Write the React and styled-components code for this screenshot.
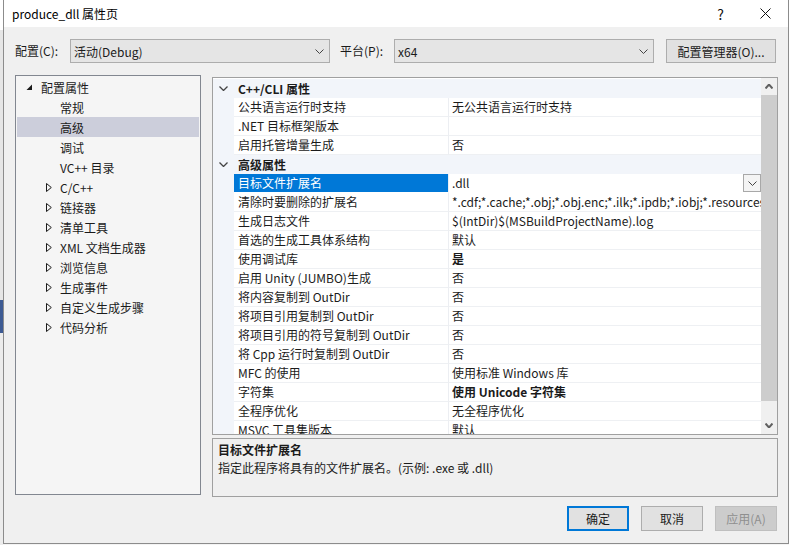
import React from 'react';
import styled, { createGlobalStyle } from 'styled-components';

const FONT = `"Noto Sans CJK SC", "Noto Sans", sans-serif`;

const GlobalStyle = createGlobalStyle`
  html, body { margin: 0; padding: 0; background: #f4f4f4; }
  body { font-family: ${FONT}; font-size: 12px; color: #1b1b1b; }
  * { box-sizing: border-box; }
`;

const Page = styled.div`
  display: flex;
  width: 789px;
  height: 545px;
  overflow: hidden;
  background: #f4f4f4;
`;

const Backdrop = styled.div`
  width: 3px;
  flex: none;
  background: linear-gradient(to bottom, #ffffff 0 30px, #e6e6e6 30px 300px, #3d5a93 300px 333px, #ececec 333px);
`;

const Window = styled.div`
  width: 786px;
  height: 544px;
  flex: none;
  display: flex;
  flex-direction: column;
  background: #f0f0f0;
  border: 1px solid #8c8c8c;
  border-top: none;
`;

const TitleBar = styled.div`
  height: 27px;
  flex: none;
  display: flex;
  align-items: center;
  background: #ffffff;
  padding-left: 8px;
`;

const Title = styled.div`
  flex: 1;
  font-size: 12px;
  color: #000;
`;

const TitleButton = styled.div`
  width: 45px;
  height: 27px;
  display: flex;
  align-items: center;
  justify-content: center;
  font-size: 14px;
  color: #111;
`;

const Body = styled.div`
  flex: 1;
  display: flex;
  flex-direction: column;
  padding: 12px 11px 0 11px;
`;

const ConfigRow = styled.div`
  display: flex;
  align-items: center;
  height: 24px;
`;

const FieldLabel = styled.div`
  width: ${p => p.$w}px;
  margin-left: ${p => p.$ml || 0}px;
  line-height: 24px;
  white-space: nowrap;
`;

const Select = styled.div`
  width: 260px;
  height: 24px;
  display: flex;
  align-items: center;
  justify-content: space-between;
  padding: 0 5px 0 3px;
  background: #e5e5e5;
  border: 1px solid #adadad;
`;

const DialogButton = styled.button`
  font: inherit;
  font-size: 12px;
  width: ${p => p.$w || 62}px;
  height: ${p => p.$h || 25}px;
  margin-left: ${p => p.$ml || 0}px;
  padding: 0;
  background: ${p => (p.$disabled ? '#cccccc' : '#e1e1e1')};
  color: ${p => (p.$disabled ? '#8f8f8f' : '#1b1b1b')};
  border: ${p => (p.$primary ? '2px solid #0078d7' : p.$disabled ? '1px solid #bfbfbf' : '1px solid #adadad')};
`;

const Main = styled.div`
  display: flex;
  align-items: flex-start;
  gap: 11px;
  margin-top: 12px;
`;

const Tree = styled.div`
  width: 186px;
  height: 420px;
  flex: none;
  background: #f5f5f5;
  border: 1px solid #828790;
  padding: 1px;
`;

const TreeRow = styled.div`
  height: 20px;
  display: flex;
  align-items: center;
  padding-left: ${p => 8 + p.$level * 19}px;
  background: ${p => (p.$selected ? '#cccedb' : 'transparent')};
  white-space: nowrap;
`;

const TreeToggle = styled.div`
  width: 16px;
  height: 20px;
  flex: none;
  display: flex;
  align-items: center;
  padding-left: ${p => p.$pad}px;
`;

const RightCol = styled.div`
  width: 566px;
  flex: none;
  display: flex;
  flex-direction: column;
`;

const Grid = styled.div`
  margin-top: 2px;
  height: 358px;
  display: flex;
  background: #ffffff;
  border: 1px solid #a0a0a0;
`;

const Rows = styled.div`
  flex: 1;
  padding-top: 1px;
  overflow: hidden;
`;

const CategoryRow = styled.div`
  height: 19px;
  display: flex;
  align-items: center;
  background: #f2f5fa;
`;

const Gutter = styled.div`
  width: 21px;
  height: 19px;
  flex: none;
  display: flex;
  align-items: center;
  justify-content: center;
  background: #f2f5fa;
`;

const CategoryLabel = styled.div`
  padding-left: 4px;
  font-weight: bold;
  line-height: 19px;
`;

const PropRow = styled.div`
  height: 19px;
  display: flex;
`;

const NameCell = styled.div`
  width: 215px;
  flex: none;
  padding-left: 4px;
  line-height: 18px;
  white-space: nowrap;
  overflow: hidden;
  border-right: 1px solid #eceef2;
  border-bottom: 1px solid ${p => (p.$selected ? '#ffffff' : '#eef0f3')};
  background: ${p => (p.$selected ? '#0078d7' : '#ffffff')};
  color: ${p => (p.$selected ? '#ffffff' : '#1b1b1b')};
`;

const ValueCell = styled.div`
  flex: 1;
  min-width: 0;
  display: flex;
  align-items: flex-start;
  padding-left: 3px;
  line-height: 18px;
  white-space: nowrap;
  overflow: hidden;
  font-weight: ${p => (p.$bold ? 'bold' : 'normal')};
  border-bottom: 1px solid ${p => (p.$selected ? '#ffffff' : '#eef0f3')};
`;

const ValueText = styled.span`
  flex: 1;
  overflow: hidden;
`;

const DropButton = styled.div`
  width: 18px;
  height: 18px;
  flex: none;
  display: flex;
  align-items: center;
  justify-content: center;
  background: #f4f4f4;
  border: 1px solid #a8a8a8;
`;

const ScrollBar = styled.div`
  width: 16px;
  flex: none;
  display: flex;
  flex-direction: column;
  background: #f0f0f0;
`;

const ScrollArrow = styled.div`
  height: 17px;
  flex: none;
  display: flex;
  align-items: center;
  justify-content: center;
`;

const ScrollThumb = styled.div`
  height: 306px;
  flex: none;
  background: #cdcdcd;
`;

const ScrollRest = styled.div`
  flex: 1;
`;

const Desc = styled.div`
  margin-top: 3px;
  height: 59px;
  padding: 2px 5px;
  background: #f0f0f0;
  border: 1px solid #a0a0a0;
`;

const DescTitle = styled.div`
  font-weight: bold;
  line-height: 18px;
`;

const DescText = styled.div`
  line-height: 18px;
`;

const ButtonRow = styled.div`
  display: flex;
  justify-content: flex-end;
  gap: 12px;
  margin-top: 9px;
`;

const Chevron = ({ w = 9, h = 5, color = '#555', sw = 1, up = false }) => (
  <svg width={w} height={h} viewBox={`0 0 ${w} ${h}`}>
    <polyline
      points={up ? `0.5,${h - 0.5} ${w / 2},0.5 ${w - 0.5},${h - 0.5}` : `0.5,0.5 ${w / 2},${h - 0.5} ${w - 0.5},0.5`}
      fill="none"
      stroke={color}
      strokeWidth={sw}
    />
  </svg>
);

const OpenTriangle = () => (
  <svg width="7" height="7" viewBox="0 0 7 7">
    <polygon points="6,0.5 6,6 0.5,6" fill="#1b1b1b" />
  </svg>
);

const ClosedTriangle = () => (
  <svg width="6" height="9" viewBox="0 0 6 9">
    <polygon points="0.5,0.5 5.3,4.5 0.5,8.5" fill="none" stroke="#1b1b1b" strokeWidth="1" />
  </svg>
);

const treeItems = [
  { label: '配置属性', level: 0, toggle: 'open' },
  { label: '常规', level: 1 },
  { label: '高级', level: 1, selected: true },
  { label: '调试', level: 1 },
  { label: 'VC++ 目录', level: 1 },
  { label: 'C/C++', level: 1, toggle: 'closed' },
  { label: '链接器', level: 1, toggle: 'closed' },
  { label: '清单工具', level: 1, toggle: 'closed' },
  { label: 'XML 文档生成器', level: 1, toggle: 'closed' },
  { label: '浏览信息', level: 1, toggle: 'closed' },
  { label: '生成事件', level: 1, toggle: 'closed' },
  { label: '自定义生成步骤', level: 1, toggle: 'closed' },
  { label: '代码分析', level: 1, toggle: 'closed' },
];

const LONG_EXT =
  '*.cdf;*.cache;*.obj;*.obj.enc;*.ilk;*.ipdb;*.iobj;*.resources;*.tlb;*.tli;*.tlh;*.tmp;*.rsp;*.pgc;*.pgd;*.meta;*.tlog;*.manifest;*.res;*.pch;*.exp;*.idb;*.rep;*.xdc;*.pdb;*_manifest.rc;*.bsc;*.sbr;*.xml;*.metagen;*.bi';

const gridRows = [
  { cat: 'C++/CLI 属性' },
  { name: '公共语言运行时支持', value: '无公共语言运行时支持' },
  { name: '.NET 目标框架版本', value: '' },
  { name: '启用托管增量生成', value: '否' },
  { cat: '高级属性' },
  { name: '目标文件扩展名', value: '.dll', selected: true },
  { name: '清除时要删除的扩展名', value: LONG_EXT },
  { name: '生成日志文件', value: '$(IntDir)$(MSBuildProjectName).log' },
  { name: '首选的生成工具体系结构', value: '默认' },
  { name: '使用调试库', value: '是', bold: true },
  { name: '启用 Unity (JUMBO)生成', value: '否' },
  { name: '将内容复制到 OutDir', value: '否' },
  { name: '将项目引用复制到 OutDir', value: '否' },
  { name: '将项目引用的符号复制到 OutDir', value: '否' },
  { name: '将 Cpp 运行时复制到 OutDir', value: '否' },
  { name: 'MFC 的使用', value: '使用标准 Windows 库' },
  { name: '字符集', value: '使用 Unicode 字符集', bold: true },
  { name: '全程序优化', value: '无全程序优化' },
  { name: 'MSVC 工具集版本', value: '默认' },
];

export default function App() {
  return (
    <>
      <GlobalStyle />
      <Page>
        <Backdrop />
        <Window>
          <TitleBar>
            <Title>produce_dll 属性页</Title>
            <TitleButton>?</TitleButton>
            <TitleButton>
              <svg width="11" height="11" viewBox="0 0 11 11">
                <path d="M0.5 0.5 L10.5 10.5 M10.5 0.5 L0.5 10.5" stroke="#111" strokeWidth="1" />
              </svg>
            </TitleButton>
          </TitleBar>
          <Body>
            <ConfigRow>
              <FieldLabel $w={55}>配置(C):</FieldLabel>
              <Select>
                <span>活动(Debug)</span>
                <Chevron color="#444" />
              </Select>
              <FieldLabel $w={54} $ml={10}>平台(P):</FieldLabel>
              <Select>
                <span>x64</span>
                <Chevron color="#444" />
              </Select>
              <DialogButton $w={110} $h={24} $ml={12}>配置管理器(O)...</DialogButton>
            </ConfigRow>
            <Main>
              <Tree>
                {treeItems.map(item => (
                  <TreeRow key={item.label} $level={item.level} $selected={item.selected}>
                    <TreeToggle $pad={item.level === 0 ? 1 : 2}>
                      {item.toggle === 'open' && <OpenTriangle />}
                      {item.toggle === 'closed' && <ClosedTriangle />}
                    </TreeToggle>
                    <span>{item.label}</span>
                  </TreeRow>
                ))}
              </Tree>
              <RightCol>
                <Grid>
                  <Rows>
                    {gridRows.map((r, i) =>
                      r.cat ? (
                        <CategoryRow key={i}>
                          <Gutter>
                            <Chevron w={9} h={5} color="#444" sw={1.3} />
                          </Gutter>
                          <CategoryLabel>{r.cat}</CategoryLabel>
                        </CategoryRow>
                      ) : (
                        <PropRow key={i}>
                          <Gutter />
                          <NameCell $selected={r.selected}>{r.name}</NameCell>
                          <ValueCell $bold={r.bold} $selected={r.selected}>
                            <ValueText>{r.value}</ValueText>
                            {r.selected && (
                              <DropButton>
                                <Chevron w={9} h={5} color="#444" />
                              </DropButton>
                            )}
                          </ValueCell>
                        </PropRow>
                      )
                    )}
                  </Rows>
                  <ScrollBar>
                    <ScrollArrow>
                      <Chevron w={8} h={5} color="#606060" sw={2} up />
                    </ScrollArrow>
                    <ScrollThumb />
                    <ScrollRest />
                    <ScrollArrow>
                      <Chevron w={8} h={5} color="#606060" sw={2} />
                    </ScrollArrow>
                  </ScrollBar>
                </Grid>
                <Desc>
                  <DescTitle>目标文件扩展名</DescTitle>
                  <DescText>指定此程序将具有的文件扩展名。(示例: .exe 或 .dll)</DescText>
                </Desc>
              </RightCol>
            </Main>
            <ButtonRow>
              <DialogButton $primary>确定</DialogButton>
              <DialogButton>取消</DialogButton>
              <DialogButton $disabled>应用(A)</DialogButton>
            </ButtonRow>
          </Body>
        </Window>
      </Page>
    </>
  );
}
